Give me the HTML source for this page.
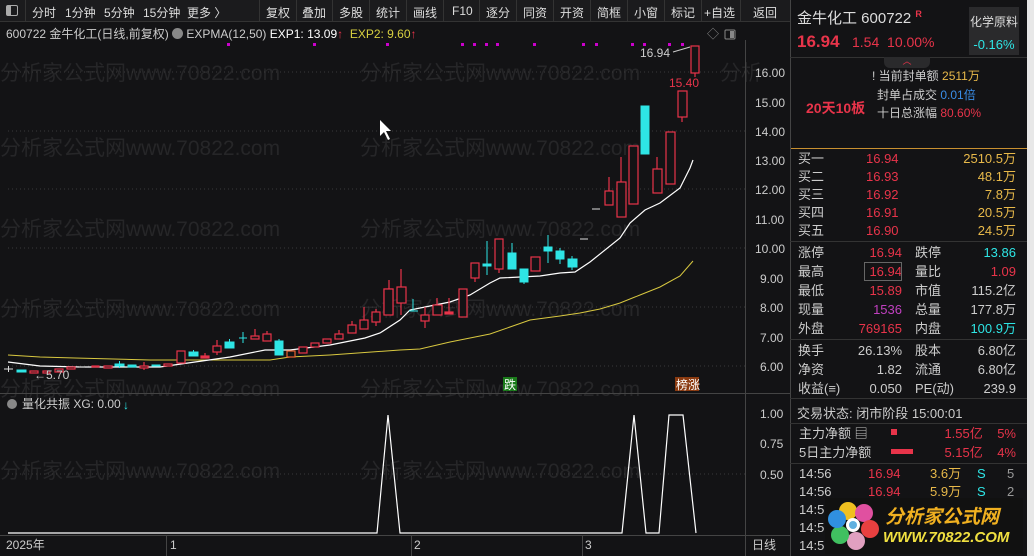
<!DOCTYPE html>
<html><head><meta charset="utf-8"><style>
*{margin:0;padding:0;box-sizing:border-box}
body{width:1034px;height:556px;background:#131315;overflow:hidden;font-family:"Liberation Sans","Noto Sans CJK SC",sans-serif;color:#ccc;position:relative}
.a{position:absolute;white-space:nowrap}
.tb{position:absolute;left:0;top:0;width:790px;height:22px;background:#1b1b1d;border-bottom:1px solid #333;font-size:12px;color:#ddd}
.tb span{position:absolute;top:4px}
.sep{position:absolute;top:0;width:1px;height:22px;background:#333}
.rp{font-size:13px}
.r{color:#e8344a}.y{color:#e8b94a}.c{color:#2ee5e5}.w{color:#ccc}.b{color:#3a8ee8}
.hl{position:absolute;left:790px;width:237px;height:1px;background:#333}
</style></head><body>
<div class="tb">
<div style="position:absolute;left:6px;top:5px;width:12px;height:11px;border:1px solid #aaa;border-radius:2px"><div style="width:4px;height:9px;background:#aaa"></div></div>
<div class="sep" style="left:25px"></div>
<span style="left:32px">分时</span><span style="left:65px">1分钟</span><span style="left:104px">5分钟</span><span style="left:143px">15分钟</span><span style="left:187px">更多 〉</span>
<div class="sep" style="left:259px"></div><span style="left:266px">复权</span>
<div class="sep" style="left:296px"></div><span style="left:302px">叠加</span>
<div class="sep" style="left:332px"></div><span style="left:339px">多股</span>
<div class="sep" style="left:369px"></div><span style="left:376px">统计</span>
<div class="sep" style="left:406px"></div><span style="left:413px">画线</span>
<div class="sep" style="left:443px"></div><span style="left:452px">F10</span>
<div class="sep" style="left:479px"></div><span style="left:486px">逐分</span>
<div class="sep" style="left:516px"></div><span style="left:523px">同资</span>
<div class="sep" style="left:553px"></div><span style="left:560px">开资</span>
<div class="sep" style="left:590px"></div><span style="left:597px">简框</span>
<div class="sep" style="left:627px"></div><span style="left:634px">小窗</span>
<div class="sep" style="left:664px"></div><span style="left:671px">标记</span>
<div class="sep" style="left:701px"></div><span style="left:704px">+自选</span>
<div class="sep" style="left:740px"></div><span style="left:753px">返回</span>
</div>
<div class="a" style="left:6px;top:25px;font-size:12px;color:#ccc">600722 金牛化工(日线,前复权) <span style="display:inline-block;width:11px;height:11px;border-radius:50%;background:#888;vertical-align:-1px"></span> EXPMA(12,50) <span style="color:#fff">EXP1: 13.09</span><span class="r">↑</span> &nbsp;<span style="color:#d8d040">EXP2: 9.60</span><span class="r">↑</span></div>
<svg class="a" style="left:0;top:0" width="790" height="556">
<g fill="#262628" font-size="21" font-family="Liberation Sans,Noto Sans CJK SC,sans-serif">
<text x="0" y="80">分析家公式网www.70822.com</text><text x="360" y="80">分析家公式网www.70822.com</text><text x="720" y="80">分析</text>
<text x="0" y="155">分析家公式网www.70822.com</text><text x="360" y="155">分析家公式网www.70822.com</text>
<text x="0" y="236">分析家公式网www.70822.com</text><text x="360" y="236">分析家公式网www.70822.com</text>
<text x="0" y="316">分析家公式网www.70822.com</text><text x="360" y="316">分析家公式网www.70822.com</text>
<text x="0" y="396">分析家公式网www.70822.com</text><text x="360" y="396">分析家公式网www.70822.com</text>
<text x="0" y="478">分析家公式网www.70822.com</text><text x="360" y="478">分析家公式网www.70822.com</text>
</g>
<g stroke="#3a3a3a" stroke-dasharray="1,3">
<line x1="8" y1="72" x2="745" y2="72"/><line x1="8" y1="131" x2="745" y2="131"/><line x1="8" y1="189" x2="745" y2="189"/><line x1="8" y1="248" x2="745" y2="248"/><line x1="8" y1="307" x2="745" y2="307"/><line x1="8" y1="366" x2="745" y2="366"/><line x1="8" y1="474" x2="745" y2="474"/>
</g>
<line x1="745.5" y1="40" x2="745.5" y2="556" stroke="#444"/>
<line x1="0" y1="393.5" x2="790" y2="393.5" stroke="#444"/>
<line x1="0" y1="535.5" x2="790" y2="535.5" stroke="#444"/>
<g fill="#c0c" ><rect x="227" y="43" width="3" height="3"/><rect x="313" y="43" width="3" height="3"/><rect x="386" y="43" width="3" height="3"/><rect x="461" y="43" width="3" height="3"/><rect x="473" y="43" width="3" height="3"/><rect x="485" y="43" width="3" height="3"/><rect x="496" y="43" width="3" height="3"/><rect x="533" y="43" width="3" height="3"/><rect x="582" y="43" width="3" height="3"/><rect x="595" y="43" width="3" height="3"/><rect x="631" y="43" width="3" height="3"/><rect x="643" y="43" width="3" height="3"/><rect x="668" y="43" width="3" height="3"/><rect x="681" y="43" width="3" height="3"/></g>
<polyline fill="none" stroke="#d8c840" stroke-width="1" points="8,355 40,357 75,358 150,360 270,360 290,357 330,355 400,350 420,349 450,342 490,334 530,320 560,316 580,313 600,309 620,303 640,295 660,287 680,276 693,261"/>
<polyline fill="none" stroke="#fff" stroke-width="1.2" points="8,362 40,366 80,367 160,367 195,362 230,357 265,350 290,350 330,345 365,338 380,333 400,320 410,310 430,306 450,302 470,295 490,283 500,278 540,276 560,273 575,272 590,262 620,238 630,223 645,210 660,203 680,188 690,168 693,160"/>
<g stroke="#e8344a" fill="#131315" stroke-width="1.2">
<rect x="30" y="371" width="8" height="2"/><rect x="43" y="371" width="7" height="2"/><rect x="55" y="369" width="8" height="3"/><rect x="67" y="367" width="8" height="2"/><rect x="92" y="366" width="7" height="1"/><rect x="104" y="366" width="8" height="2"/><line x1="144" y1="362" x2="144" y2="370"/><rect x="140" y="366" width="8" height="2"/><rect x="164" y="364" width="8" height="2"/>
<rect x="177" y="351" width="8" height="12"/><line x1="205" y1="353" x2="205" y2="356"/><rect x="201" y="356" width="8" height="2" fill="#e8344a"/><line x1="217" y1="340" x2="217" y2="355"/><rect x="213" y="346" width="8" height="6"/><line x1="255" y1="329" x2="255" y2="336"/><rect x="251" y="336" width="8" height="3"/><line x1="267" y1="331" x2="267" y2="334"/><rect x="263" y="334" width="8" height="7"/>
<rect x="287" y="351" width="8" height="6" stroke="#e86030"/><rect x="299" y="347" width="8" height="6"/><rect x="311" y="343" width="8" height="4"/><rect x="323" y="339" width="8" height="4"/><line x1="339" y1="330" x2="339" y2="334"/><rect x="335" y="334" width="8" height="5"/><line x1="352" y1="321" x2="352" y2="325"/><rect x="348" y="325" width="8" height="8"/><line x1="364" y1="307" x2="364" y2="329"/><rect x="360" y="320" width="8" height="9"/><line x1="376" y1="309" x2="376" y2="326"/><rect x="372" y="312" width="8" height="10"/><rect x="384" y="289" width="9" height="25"/><line x1="389" y1="280" x2="389" y2="289"/>
<rect x="384" y="289" width="9" height="26"/><line x1="401" y1="269" x2="401" y2="315"/><rect x="397" y="287" width="9" height="16"/><line x1="425" y1="307" x2="425" y2="328"/><rect x="421" y="315" width="8" height="6"/><line x1="437" y1="298" x2="437" y2="305"/><rect x="433" y="305" width="9" height="10"/><line x1="449" y1="298" x2="449" y2="312"/><rect x="445" y="312" width="8" height="2" fill="#e8344a"/><rect x="459" y="289" width="8" height="28"/><line x1="475" y1="278" x2="475" y2="282"/><rect x="471" y="263" width="8" height="15"/><rect x="495" y="239" width="8" height="30"/><line x1="499" y1="269" x2="499" y2="273"/><rect x="531" y="257" width="9" height="14"/>
<line x1="609" y1="177" x2="609" y2="191"/><rect x="605" y="191" width="8" height="14"/><line x1="621" y1="157" x2="621" y2="182"/><rect x="617" y="182" width="9" height="35"/><rect x="629" y="146" width="9" height="58"/><line x1="657" y1="157" x2="657" y2="169"/><rect x="653" y="169" width="9" height="24"/><rect x="666" y="132" width="9" height="52"/><rect x="678" y="91" width="9" height="26"/><line x1="682" y1="117" x2="682" y2="122"/><rect x="691" y="46" width="8" height="27"/><line x1="695" y1="73" x2="695" y2="77"/>
</g>
<g fill="#2ee5e5" stroke="#2ee5e5">
<rect x="17" y="370" width="9" height="2"/><rect x="115" y="364" width="9" height="2"/><line x1="119.5" y1="361" x2="119.5" y2="368"/><rect x="128" y="365" width="8" height="2"/><rect x="152" y="365" width="8" height="1"/><rect x="189" y="352" width="9" height="4"/><line x1="193.5" y1="350" x2="193.5" y2="356"/><rect x="225" y="342" width="9" height="6"/><line x1="229.5" y1="339" x2="229.5" y2="342"/><line x1="239" y1="338" x2="247" y2="338"/><line x1="243" y1="332" x2="243" y2="343"/><rect x="275" y="341" width="8" height="14"/><line x1="279" y1="339" x2="279" y2="341"/>
<line x1="413" y1="299" x2="413" y2="311"/><line x1="409" y1="311" x2="418" y2="311"/><rect x="483" y="264" width="8" height="2"/><line x1="487" y1="241" x2="487" y2="275"/><rect x="508" y="253" width="8" height="16"/><line x1="512" y1="243" x2="512" y2="253"/><rect x="520" y="269" width="8" height="13"/><line x1="524" y1="282" x2="524" y2="284"/><rect x="544" y="247" width="8" height="4"/><line x1="548" y1="235" x2="548" y2="263"/><rect x="556" y="251" width="8" height="8"/><line x1="560" y1="248" x2="560" y2="264"/><rect x="568" y="259" width="9" height="8"/><line x1="572" y1="256" x2="572" y2="270"/><rect x="641" y="106" width="8" height="48"/>
</g>
<g stroke="#ddd"><line x1="4" y1="369" x2="13" y2="369"/><line x1="8.5" y1="366" x2="8.5" y2="372"/><line x1="79" y1="367" x2="85" y2="367"/><line x1="580" y1="239" x2="588" y2="239"/><line x1="592" y1="209" x2="600" y2="209"/></g>
<text x="34" y="379" fill="#ccc" font-size="12">←5.70</text>
<text x="640" y="57" fill="#ccc" font-size="12">16.94</text><line x1="673" y1="52" x2="690" y2="47" stroke="#ccc"/>
<text x="669" y="87" fill="#e8344a" font-size="12">15.40</text>
<text x="707" y="38" fill="#888" font-size="12">◇</text><rect x="725" y="30" width="10" height="9" rx="1" fill="none" stroke="#888"/><rect x="730" y="31" width="4" height="7" fill="#888"/>
<g fill="#ccc" font-size="12"><text x="755" y="77">16.00</text><text x="755" y="107">15.00</text><text x="755" y="136">14.00</text><text x="755" y="165">13.00</text><text x="755" y="194">12.00</text><text x="755" y="224">11.00</text><text x="755" y="253">10.00</text><text x="760" y="283">9.00</text><text x="760" y="312">8.00</text><text x="760" y="342">7.00</text><text x="760" y="371">6.00</text>
<text x="760" y="418">1.00</text><text x="760" y="448">0.75</text><text x="760" y="479">0.50</text>
<text x="6" y="549">2025年</text><text x="170" y="549">1</text><text x="414" y="549">2</text><text x="585" y="549">3</text><text x="752" y="549">日线</text></g>
<g stroke="#444"><line x1="166.5" y1="536" x2="166.5" y2="556"/><line x1="411.5" y1="536" x2="411.5" y2="556"/><line x1="582.5" y1="536" x2="582.5" y2="556"/></g>
<rect x="503" y="377" width="14" height="14" fill="#1a7a1a"/><text x="504" y="389" fill="#fff" font-size="12">跌</text>
<rect x="675" y="377" width="24" height="14" fill="#8a3a10"/><text x="676" y="389" fill="#fff" font-size="12">榜涨</text>
<circle cx="12" cy="404" r="5" fill="#888"/>
<text x="22" y="408" fill="#ccc" font-size="12">量化共振 XG: 0.00</text><text x="123" y="409" fill="#2ee5e5" font-size="12">↓</text>
<polyline fill="none" stroke="#fff" stroke-width="1.2" points="8,533 377,533 388,415 400,533 622,533 634,415 646,533 659,533 669,415 683,415 696,533"/>
<path d="M380 120 L380 136 L384 132 L388 140 L390 139 L386 131 L391 131 Z" fill="#fff"/>
</svg>
<!-- right panel -->
<div class="a" style="left:790px;top:0;width:1px;height:556px;background:#444"></div>
<div class="a" style="left:1027px;top:0;width:7px;height:556px;background:#e8e8e8"></div>
<div class="a" style="left:797px;top:7px;font-size:15px;color:#ddd">金牛化工 600722 <sup class="r" style="font-size:9px;font-weight:bold">R</sup></div>
<div class="a r" style="left:797px;top:32px;font-size:17px;font-weight:bold">16.94</div>
<div class="a r" style="left:852px;top:34px;font-size:14px">1.54 &nbsp;10.00%</div>
<div class="a" style="left:969px;top:7px;width:50px;height:48px;background:#2a2a2c"><div style="font-size:12px;color:#ddd;text-align:center;margin-top:6px">化学原料</div><div class="c" style="font-size:13px;text-align:center;margin-top:7px">-0.16%</div></div>
<div class="hl" style="top:57px"></div>
<div class="a" style="left:884px;top:57px;width:46px;height:11px;background:#2a2a2c;border-radius:0 0 6px 6px;color:#e8344a;font-size:9px;text-align:center;line-height:8px">︿</div>
<div class="a rp" style="left:872px;top:67px;font-size:12px;color:#ccc">! 当前封单额 <span class="y">2511万</span></div>
<div class="a rp" style="left:877px;top:86px;font-size:12px">封单占成交 <span class="b">0.01倍</span></div>
<div class="a rp" style="left:877px;top:104px;font-size:12px">十日总涨幅 <span class="r">80.60%</span></div>
<div class="a r" style="left:806px;top:98px;font-size:14px;font-weight:bold">20天10板</div>
<div class="a" style="left:791px;top:148px;width:236px;height:1px;background:#c89030"></div>
<div class="a rp" style="left:798px;top:150px;line-height:18px;font-size:13px">买一<br>买二<br>买三<br>买四<br>买五</div>
<div class="a rp r" style="left:866px;top:150px;line-height:18px;font-size:13px">16.94<br>16.93<br>16.92<br>16.91<br>16.90</div>
<div class="a rp y" style="right:18px;top:150px;line-height:18px;font-size:13px;text-align:right">2510.5万<br>48.1万<br>7.8万<br>20.5万<br>24.5万</div>
<div class="hl" style="top:241px"></div>
<div class="a rp" style="left:798px;top:243px;line-height:19px">涨停<br>最高<br>最低<br>现量<br>外盘</div>
<div class="a rp r" style="left:825px;top:243px;line-height:19px;width:77px;text-align:right">16.94<br>16.94<br>15.89<br><span style="color:#c040c0">1536</span><br>769165</div>
<div class="a" style="left:864px;top:262px;width:38px;height:19px;border:1px solid #666"></div>
<div class="a rp" style="left:915px;top:243px;line-height:19px">跌停<br>量比<br>市值<br>总量<br>内盘</div>
<div class="a rp" style="right:18px;top:243px;line-height:19px;text-align:right"><span class="c">13.86</span><br><span class="r">1.09</span><br>115.2亿<br>177.8万<br><span class="c">100.9万</span></div>
<div class="hl" style="top:339px"></div>
<div class="a rp" style="left:798px;top:341px;line-height:19px">换手<br>净资<br>收益(≡)</div>
<div class="a rp" style="left:825px;top:341px;line-height:19px;width:77px;text-align:right">26.13%<br>1.82<br>0.050</div>
<div class="a rp" style="left:915px;top:341px;line-height:19px">股本<br>流通<br>PE(动)</div>
<div class="a rp" style="right:18px;top:341px;line-height:19px;text-align:right">6.80亿<br>6.80亿<br>239.9</div>
<div class="hl" style="top:398px"></div>
<div class="a rp" style="left:797px;top:403px">交易状态: 闭市阶段 15:00:01</div>
<div class="hl" style="top:423px"></div>
<div class="a rp" style="left:799px;top:424px;line-height:19px">主力净额 ▤<br>5日主力净额</div>
<div class="a" style="left:891px;top:429px;width:6px;height:6px;background:#e8344a"></div>
<div class="a" style="left:891px;top:449px;width:22px;height:5px;background:#e8344a"></div>
<div class="a rp r" style="right:18px;top:424px;line-height:19px;text-align:right">1.55亿 &nbsp;&nbsp;&nbsp;5%<br>5.15亿 &nbsp;&nbsp;&nbsp;4%</div>
<div class="hl" style="top:463px"></div>
<div class="a rp" style="left:799px;top:465px;line-height:18px">14:56<br>14:56<br>14:5<br>14:5<br>14:5</div>
<div class="a rp r" style="left:868px;top:465px;line-height:18px">16.94<br>16.94</div>
<div class="a rp y" style="left:930px;top:465px;line-height:18px">3.6万<br>5.9万</div>
<div class="a rp c" style="left:977px;top:465px;line-height:18px">S<br>S</div>
<div class="a rp" style="left:1007px;top:465px;line-height:18px;color:#999">5<br>2</div>
<div class="a" style="left:825px;top:498px;width:198px;height:56px;background:#111"></div>
<svg class="a" style="left:826px;top:497px" width="60" height="58">
<circle cx="22" cy="14" r="9" fill="#f0c020"/><circle cx="38" cy="16" r="9" fill="#e050a0"/><circle cx="44" cy="32" r="9" fill="#e84040"/><circle cx="30" cy="44" r="9" fill="#e0a0c0"/><circle cx="14" cy="38" r="9" fill="#40c060"/><circle cx="11" cy="22" r="9" fill="#3090e0"/><circle cx="27" cy="28" r="7" fill="#fff"/><circle cx="27" cy="28" r="4" fill="#60b0e0"/>
</svg>
<div class="a" style="left:885px;top:502px;font-size:19px;font-weight:bold;font-style:italic;color:#f0b020">分析家公式网</div>
<div class="a" style="left:883px;top:529px;font-size:15px;font-weight:bold;font-style:italic;color:#f0e040">WWW.70822.COM</div>
</body></html>
